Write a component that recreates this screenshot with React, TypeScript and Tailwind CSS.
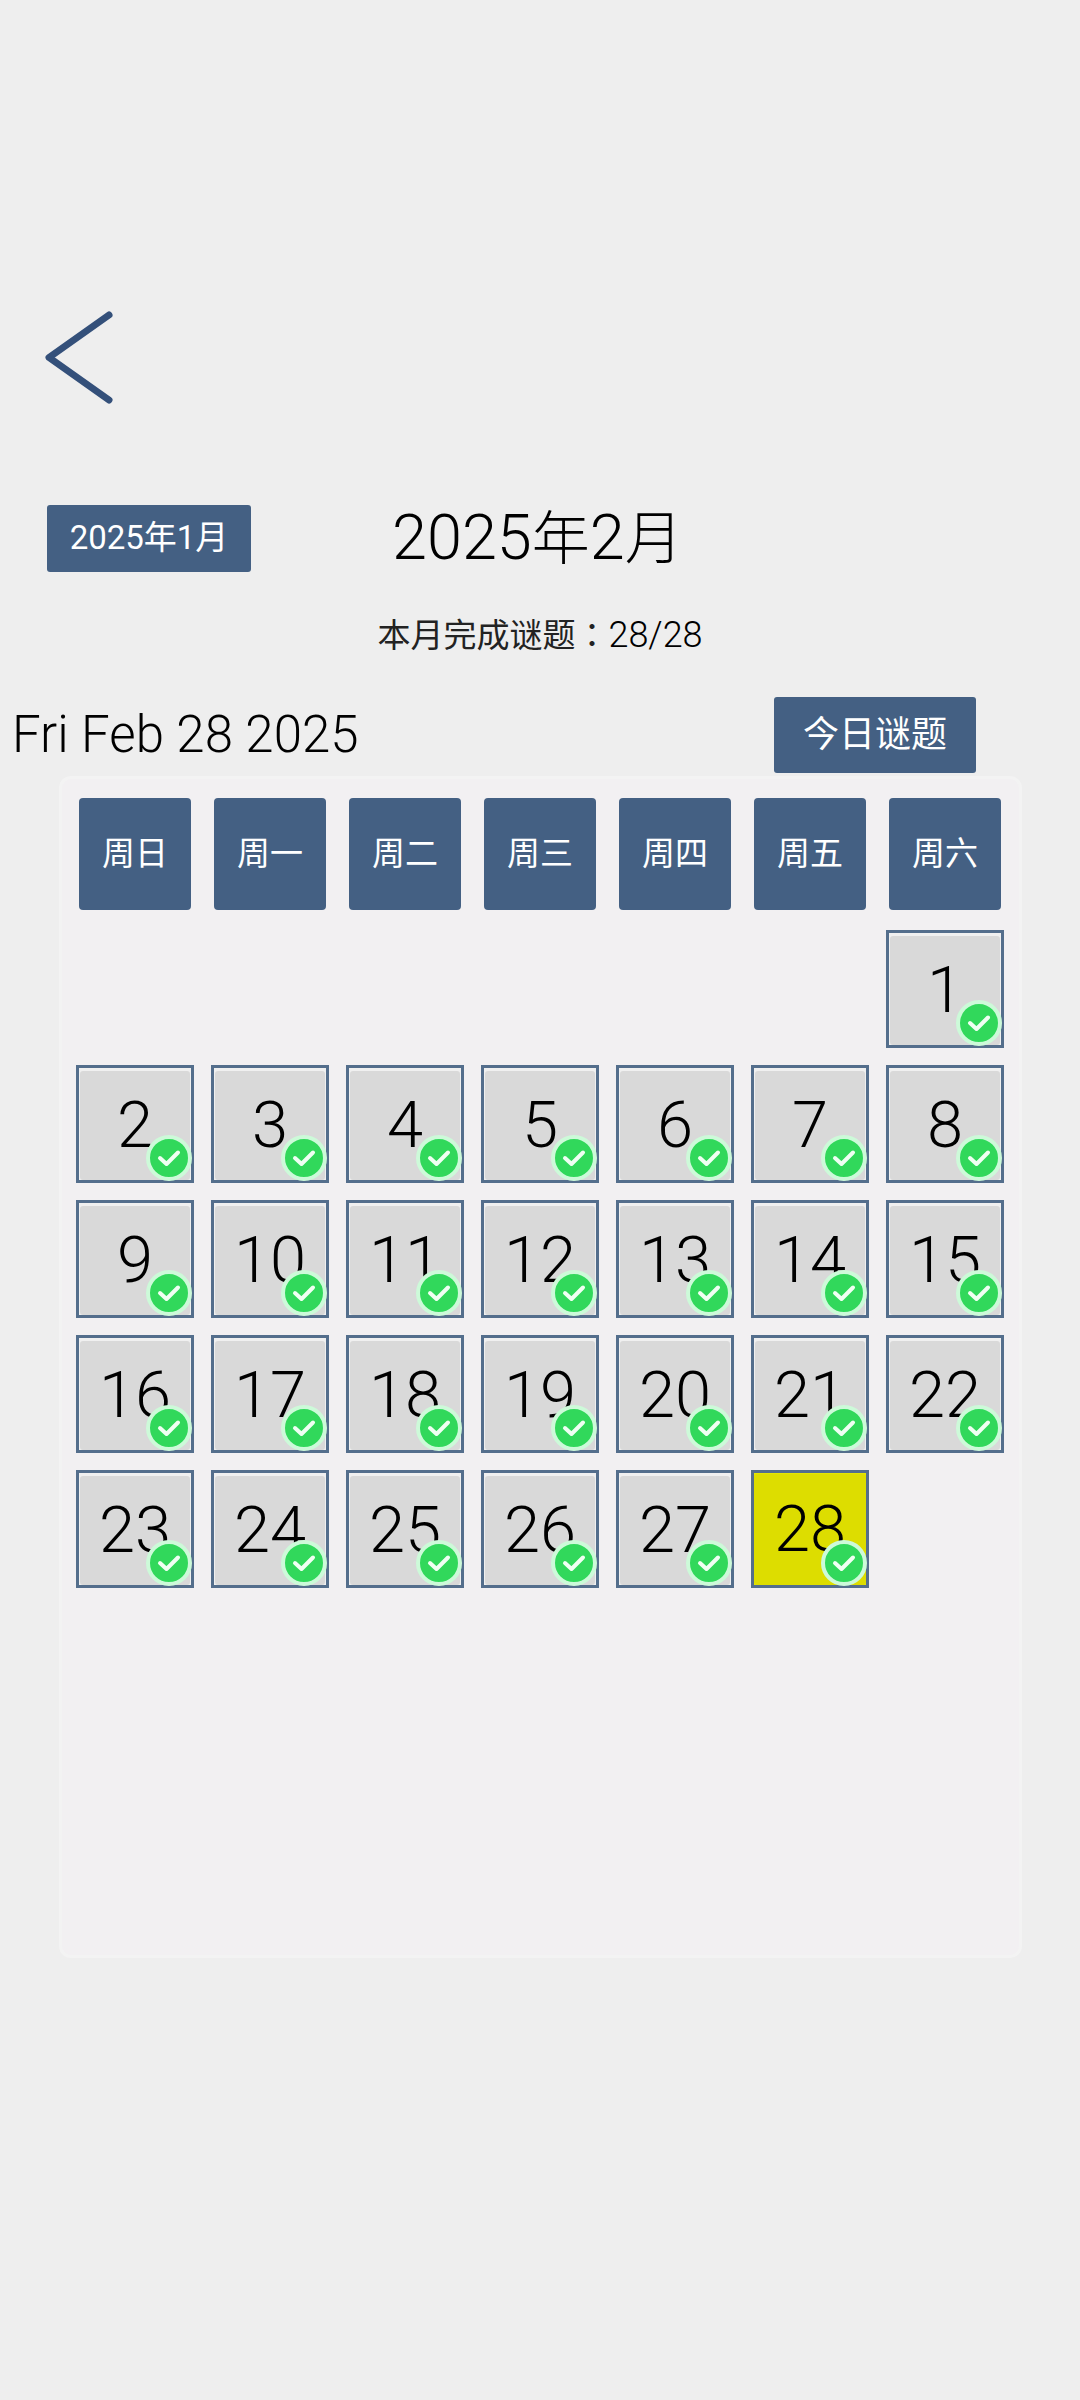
const weekDays = ["周日", "周一", "周二", "周三", "周四", "周五", "周六"];
const days = Array.from({ length: 28 }, (_, i) => i + 1);

function Badge() {
  return (
    <span className="absolute right-[-1px] bottom-[-1px] flex h-[46px] w-[46px] items-center justify-center rounded-full border-[4px] border-[#cdfad9] bg-[#31d85b]">
      <svg width="24" height="20" viewBox="0 0 24 20" fill="none">
        <path d="M3 10 L9.5 16 L21 4.5" stroke="#f0fff3" strokeWidth="4" strokeLinecap="round" strokeLinejoin="round" />
      </svg>
    </span>
  );
}

function Day({ n }: { n: number }) {
  const today = n === 28;
  return (
    <div className={`relative h-[118px] w-[118px] border-[3px] border-[#546e8c] ${today ? "bg-[#e6e600] pt-[1px]" : "bg-[#f0f0f0] px-[1px] pt-[3px]"}`}>
      <div className={`flex h-full w-full items-center justify-center rounded-[3px] text-[65px] leading-none font-light text-black ${today ? "bg-[#dddd00]" : "bg-[#d9d9d9]"}`}>
        <span>{n}</span>
      </div>
      <Badge />
    </div>
  );
}

export default function App() {
  return (
    <div className="h-[2400px] w-[1080px] overflow-hidden bg-[#eeeeee] font-['Roboto','Noto_Sans_CJK_SC',sans-serif]">
      <div className="pt-[310px] pl-[45px]">
        <svg width="70" height="96" viewBox="0 0 70 96" fill="none" className="block">
          <path d="M64 5 L4 47.5 L64 90" stroke="#34507a" strokeWidth="7" strokeLinecap="round" strokeLinejoin="round" />
        </svg>
      </div>
      <div className="mt-[87px] flex h-[90px] items-center">
        <button className="ml-[47px] h-[67px] w-[204px] rounded-[3px] bg-[#446083] text-[33px] text-white">2025年1月</button>
        <h1 className="ml-[141px] text-[63px] leading-[90px] font-light text-black">2025<span className="text-[58px]">年</span>2<span className="text-[58px]">月</span></h1>
      </div>
      <p className="mt-[27px] h-[46px] text-center text-[36px] leading-[46px] font-light text-black">
        <span className="text-[33px] font-normal text-[#222222]">本月完成谜题<span className="font-['Noto_Sans_CJK_TC']">：</span></span>28/28
      </p>
      <div className="mt-[41px] flex h-[76px] items-center justify-between pr-[104px] pl-[12px]">
        <span className="text-[51px] font-light text-black">Fri Feb 28 2025</span>
        <button className="h-[76px] w-[202px] rounded-[3px] bg-[#446083] text-[36px] text-white">今日谜题</button>
      </div>
      <div className="mt-[3px] ml-[59px] h-[1182px] w-[963px] rounded-[12px] border-[3px] border-[#f3f3f3] bg-[#f2f0f2] pt-[16px] pl-[14px]">
        <div className="grid grid-cols-[repeat(7,118px)] gap-[17px]">
          {weekDays.map((d) => (
            <div key={d} className="m-[3px] flex h-[112px] w-[112px] items-center justify-center rounded-[4px] bg-[#446083] text-[33px] text-white">{d}</div>
          ))}
          {Array.from({ length: 6 }, (_, i) => <div key={i} />)}
          {days.map((n) => <Day key={n} n={n} />)}
        </div>
      </div>
    </div>
  );
}
